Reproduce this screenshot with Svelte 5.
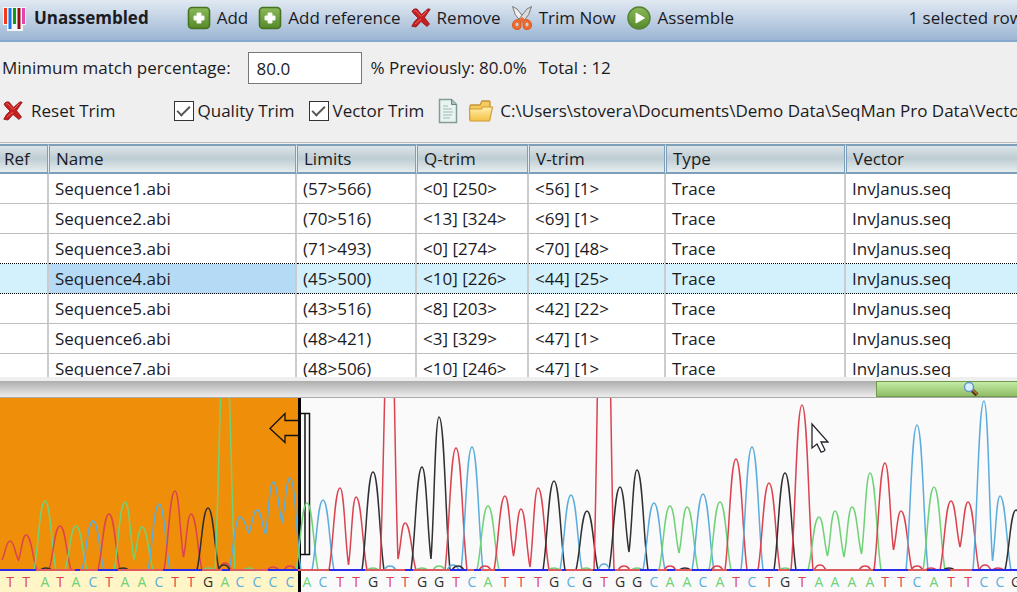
<script>
  const columns = ['Ref', 'Name', 'Limits', 'Q-trim', 'V-trim', 'Type', 'Vector'];
  const widths = [49, 248, 120, 112, 137, 180, 0];
  const rows = [
    ['Sequence1.abi', '(57>566)', '<0] [250>', '<56] [1>'],
    ['Sequence2.abi', '(70>516)', '<13] [324>', '<69] [1>'],
    ['Sequence3.abi', '(71>493)', '<0] [274>', '<70] [48>'],
    ['Sequence4.abi', '(45>500)', '<10] [226>', '<44] [25>'],
    ['Sequence5.abi', '(43>516)', '<8] [203>', '<42] [22>'],
    ['Sequence6.abi', '(48>421)', '<3] [329>', '<47] [1>'],
    ['Sequence7.abi', '(48>506)', '<10] [246>', '<47] [1>']
  ];
  let selected = $state(3);
  let minimum = $state('80.0');
  let quality = $state(true);
  let vector = $state(true);

  const floor = 172;
  const colors = { A: '#6fd277', C: '#5badde', G: '#303030', T: '#db4350' };
  // Base, centre, top of the peak, and the level of the dip before the next peak of the same base.
  const peaks = [
    ['T', 10, 143, 162], ['T', 26, 137], ['A', 45, 103], ['T', 60, 128], ['A', 76, 128], ['C', 93, 123],
    ['T', 109, 116], ['A', 125, 104, 161], ['A', 142, 129], ['C', 159, 106], ['T', 175, 93, 159],
    ['T', 191, 116], ['G', 208, 110], ['A', 225, -60], ['C', 240, 119, 135], ['C', 257, 112, 136],
    ['C', 273, 84, 124], ['C', 290, 80], ['A', 307, 105], ['C', 323, 102], ['T', 340, 90, 167],
    ['T', 356, 99], ['G', 373, 74], ['T', 390, -110, 161], ['T', 405, 125], ['G', 422, 69, 161],
    ['G', 439, 19], ['T', 456, 50], ['C', 472, 49], ['A', 488, 108], ['T', 505, 98, 158],
    ['T', 521, 111, 169], ['T', 538, 90], ['G', 554, 83], ['C', 571, 97], ['G', 587, 113],
    ['T', 604, -260], ['G', 620, 89, 154], ['G', 637, 72], ['C', 654, 105], ['A', 670, 108, 155],
    ['A', 687, 109], ['C', 703, 96], ['A', 720, 104], ['T', 736, 61], ['C', 752, 49], ['T', 769, 85],
    ['G', 785, 75], ['T', 802, 7], ['A', 819, 119, 158], ['A', 835, 113, 159], ['A', 852, 109, 156],
    ['A', 870, 75], ['T', 885, 65, 152], ['T', 901, 113], ['C', 917, 27], ['A', 934, 89],
    ['T', 951, 103, 149], ['T', 968, 104], ['C', 984, 3, 163], ['C', 1000, 98], ['G', 1016, 112]
  ];

  function flank(x0, y0, x1, y1, rising) {
    const w = x1 - x0;
    const h = y1 - y0;
    return rising
      ? `C${x0 + w * 0.4} ${y0 + h * 0.3} ${x1 - w * 0.5} ${y1} ${x1} ${y1}`
      : `C${x0 + w * 0.5} ${y0} ${x1 - w * 0.4} ${y1 - h * 0.3} ${x1} ${y1}`;
  }

  const curves = [];
  let path = '';
  peaks.forEach(([base, x, top, dip], i) => {
    const foot = top < 0 ? 10 : 11;
    if (!path) path = i === 0 ? `M2 162${flank(2, 162, x, top, true)}` : `M${x - foot} ${floor}${flank(x - foot, floor, x, top, true)}`;
    if (dip) {
      const [, nx, ntop] = peaks[i + 1];
      const mid = (x + nx) / 2 + 0.5;
      path += flank(x, top, mid, dip, false) + flank(mid, dip, nx, ntop, true);
    } else {
      path += flank(x, top, x + foot, floor, false);
      curves.push({ color: colors[base], d: path });
      path = '';
    }
  });

  const quiet = [
    [0, 36], [75, 80], [98, 118], [163, 202], [222, 230], [268, 298], [329, 365], [405, 413], [450, 467],
    [474, 481], [495, 548], [562, 566], [593, 615], [640, 657], [667, 675], [692, 712], [727, 778],
    [790, 813], [873, 908], [927, 950], [972, 2000]
  ];
  const noise = [
    ['G', 46], ['G', 123], ['A', 208], ['T', 225, 6], ['G', 224, 4], ['A', 249], ['T', 273, 2], ['T', 290, 3],
    ['A', 373], ['C', 390, 3], ['A', 422], ['A', 439, 3], ['C', 453, 4], ['G', 458, 3], ['T', 485, 3],
    ['A', 554], ['A', 586], ['C', 604, 5], ['T', 624, 3], ['A', 637], ['T', 670, 3], ['G', 685],
    ['T', 717, 3], ['A', 785], ['T', 820, 4], ['T', 865, 3], ['T', 917, 3], ['T', 931], ['G', 949], ['T', 985, 4], ['T', 998]
  ];
</script>

{#snippet cross()}
  <svg width="20" height="20" viewBox="0 0 20 20" aria-hidden="true">
    <path d="M1 3Q3 0 6 1L10.500 6.500 17 .8 19.200 1.300 13.500 9.500 18.500 16 16 18.500 10 13.500 5 19 .8 18.300Q3 13 7 10L2.500 5.500Z" fill="#c51f22" stroke="#8e1415" stroke-width=".8" />
    <path d="M3 3Q5 2 6 4L10 8.500M4 16 10 11M16 3 11 8" stroke="#e8685f" stroke-width="1" fill="none" />
  </svg>
{/snippet}

{#snippet plus()}
  <svg width="24" height="24" viewBox="0 0 24 24" aria-hidden="true">
    <rect x="1.500" y="1.500" width="21" height="21" rx="3.500" fill="url(#leaf)" stroke="#45731f" stroke-width="1.600" />
    <path d="M10 7h4v3h3v4h-3v3h-4v-3H7v-4h3Z" fill="#fff" stroke="#eef5e6" stroke-width="1" />
  </svg>
{/snippet}

<svg class="defs" width="0" height="0" aria-hidden="true">
  <defs>
    <linearGradient id="leaf" x1="0" y1="0" x2="0" y2="1"><stop stop-color="#8bb95a" /><stop offset="1" stop-color="#56892b" /></linearGradient>
    <linearGradient id="folder" x1="0" y1="0" x2="0" y2="1"><stop stop-color="#fff0ae" /><stop offset="1" stop-color="#f4c145" /></linearGradient>
  </defs>
</svg>

<main>
  <header>
    <svg width="26" height="26" viewBox="0 0 26 26" aria-hidden="true">
      <path d="M1 2h23v18h-3v6H5v-6H1Z" fill="#f4f7fa" />
      <path d="M3.500 3v16" stroke="#ee3a16" stroke-width="3" /><path d="M8 3v21" stroke="#1277ee" stroke-width="3" />
      <path d="M12.500 3v16" stroke="#109a18" stroke-width="3" /><path d="M17 3v21" stroke="#961010" stroke-width="3" />
      <path d="M21.500 3v16" stroke="#e446ad" stroke-width="3" />
    </svg>
    <h1>Unassembled</h1>
    <nav>
      <button>{@render plus()}Add</button>
      <button>{@render plus()}Add reference</button>
      <button>{@render cross()}Remove</button>
      <button>
        <svg width="22" height="26" viewBox="0 0 22 26" aria-hidden="true">
          <path d="M11 13 8.500 14.500Q2 14 1.500 20q0 4.500 5 4.500Q10 24.500 10 20v-4h2v4q0 4.500 3.500 4.500 5 0 5-4.500-.5-6-7-5.500Z" fill="#f26a29" stroke="#e1541b" />
          <path d="M1.500 1.500 6 4 14 14 10 17Q3 10 1.500 1.500Z" fill="#f0f0f0" stroke="#777" />
          <path d="M20.500 1.500 16 4 8 14 12 17Q19 10 20.500 1.500Z" fill="#dcdcdc" stroke="#777" />
          <path d="M8 14.500 11 12l3 2.500-2 2.500h-2Z" fill="#f26a29" />
          <ellipse cx="6" cy="19.500" rx="1.500" ry="2" fill="#c3cfdd" /><ellipse cx="16" cy="19.500" rx="1.500" ry="2" fill="#c3cfdd" />
        </svg>Trim Now
      </button>
      <button>
        <svg width="26" height="26" viewBox="0 0 26 26" aria-hidden="true">
          <circle cx="13" cy="13" r="11" fill="url(#leaf)" stroke="#568235" stroke-width="1.500" /><path d="M10 8 18.500 13 10 18Z" fill="#fff" stroke="#fff" />
        </svg>Assemble
      </button>
    </nav>
    <span class="status">1 selected row</span>
  </header>

  <section class="match">
    <label for="minimum">Minimum match percentage:</label>
    <input id="minimum" type="text" bind:value={minimum} />
    <span>% Previously: 80.0%</span><span class="total">Total : 12</span>
  </section>

  <section class="trim">
    <button class="reset">{@render cross()}Reset Trim</button>
    <label><input type="checkbox" bind:checked={quality} />Quality Trim</label>
    <label><input type="checkbox" bind:checked={vector} />Vector Trim</label>
    <button class="icon" aria-label="New file">
      <svg width="20" height="26" viewBox="0 0 20 26" aria-hidden="true">
        <path d="M1.500 1.500h12l5 5v18h-17Z" fill="#e9f3f0" stroke="#829c9a" stroke-width="1.500" /><path d="M13.500 1.500v5h5" fill="#a9c2bf" stroke="#648783" />
        <path d="M5 8h5M5 11h9M5 14h10M5 17h9M5 20h7" stroke="#a3bab7" />
      </svg>
    </button>
    <button class="icon" aria-label="Open folder">
      <svg width="26" height="24" viewBox="0 0 26 24" aria-hidden="true">
        <path d="M2 21V7q0-1 1-1h9l2-4h7q1 0 1 1v7" fill="#f4cb5e" stroke="#c6933a" stroke-width="1.300" />
        <path d="M1.500 10h12l1-2h10L22 20q0 2-2 2H3q-1 0-1-1Z" fill="url(#folder)" stroke="#d29c35" stroke-width="1.200" />
      </svg>
    </button>
    <span class="path">C:\Users\stovera\Documents\Demo Data\SeqMan Pro Data\Vector</span>
  </section>

  <div class="grid">
    <table>
      <colgroup>{#each widths as width}<col style={width ? `width: ${width}px` : ''} />{/each}</colgroup>
      <thead><tr>{#each columns as column}<th scope="col">{column}</th>{/each}</tr></thead>
      <tbody>
        {#each rows as row, i}
          <tr class:selected={selected === i} onclick={() => (selected = i)}>
            <td></td>{#each row as cell}<td>{cell}</td>{/each}<td>Trace</td><td>InvJanus.seq</td>
          </tr>
        {/each}
      </tbody>
    </table>
  </div>

  <div class="zoombar">
    <button aria-label="Zoom">
      <svg width="16" height="16" viewBox="0 0 16 16" aria-hidden="true">
        <path d="m9 9 5 5" stroke="#553515" stroke-width="4" /><path d="m10 9 4 4" stroke="#bc8137" stroke-width="1.500" />
        <circle cx="6" cy="6" r="4.500" fill="#d9efff" stroke="#6699c9" stroke-width="1.500" />
      </svg>
    </button>
  </div>

  <svg width="100%" height="194" role="img" aria-label="Sequence trace">
    <rect width="100%" height="194" fill="#fafafa" />
    <rect width="299" height="172" fill="#ef8e09" />
    <rect y="172" width="299" height="22" fill="#fff5c6" />
    <path d="M298 22.500h-13v-7l-15 15 15 14v-7h13" fill="none" stroke="#111" stroke-width="1.300" />
    <path d="M299.500 0v194" stroke="#000" stroke-width="3" />
    <path d="M301 15.500h8.500v141H301M305 16v140" fill="none" stroke="#111" stroke-width="1.500" />
    <g fill="none" stroke-width="1.500">
      {#each curves as curve}<path d={curve.d} stroke={curve.color} />{/each}
      {#each noise as [base, x, size = 1]}
        <path d={`M${x - 6} 172C${x - 3} ${171 - size} ${x - 2} ${171 - size} ${x} ${171 - size}S${x + 3} ${171 - size} ${x + 6} 172`} stroke={colors[base]} />
      {/each}
    </g>
    <rect y="171" width="100%" height="2" fill="#dd5960" />
    {#each quiet as [from, to]}<rect x={from} y="171" width={to - from} height="2" fill="#2a2aea" />{/each}
    <g class="bases">
      {#each peaks as [base, x]}<text {x} y="189" fill={colors[base]}>{base}</text>{/each}
    </g>
    <path d="M812 26v24l5-4 4 8q3 0 4-2l-4-8h7Z" fill="#fff" stroke="#252530" stroke-width="1.300" />
  </svg>
</main>

<style>
  :global(body) { margin: 0; background: #efefef; }
  main {
    height: 100vh; display: flex; flex-direction: column; overflow: hidden;
    background: #efefef; color: #1b1b1f; white-space: nowrap;
    font: 17px/24px "Open Sans", "Noto Sans", sans-serif;
  }
  .defs { position: absolute; }
  svg { display: block; flex: none; }
  button { font: inherit; color: inherit; border: 0; padding: 0; background: none; display: flex; align-items: center; }
  header {
    box-sizing: border-box; height: 42px; flex: none; display: flex; align-items: center; padding: 0 0 4px 2px;
    background: linear-gradient(#e1e9f2, #9cb6d4); border-bottom: 2px solid #86a8ce;
  }
  h1 { margin: 0 0 0 6px; font-size: 17px; font-weight: 700; }
  nav { display: flex; gap: 10px; margin-left: 38px; }
  nav button { gap: 6px; }
  .status { margin: 0 -6px 0 auto; }
  .match { flex: none; display: flex; align-items: center; padding: 10px 0 0 2px; }
  .match input {
    box-sizing: border-box; width: 114px; height: 32px; margin: 0 9px 0 17px; padding: 0 8px;
    border: 1px solid #777; background: #fff; color: inherit; font: inherit;
  }
  .total { margin-left: 12px; }
  .trim { flex: none; display: flex; align-items: center; height: 30px; padding: 12px 0 16px 3px; }
  .reset { gap: 8px; margin-right: 58px; }
  .trim label { display: flex; align-items: center; gap: 4px; margin-right: 14px; }
  .trim input {
    appearance: none; box-sizing: border-box; width: 20px; height: 20px; margin: 0; border: 1px solid #333;
    background: #fff; display: grid; place-items: center;
  }
  .trim input:checked::before {
    content: ""; width: 11px; height: 5px; margin-bottom: 4px; border: solid #555; border-width: 0 0 2px 2px; transform: rotate(-45deg);
  }
  .icon { margin-right: 10px; }
  .path { margin-left: -4px; }
  .grid { flex: 1 1 0; min-height: 0; overflow: hidden; border-top: 1px solid #bbb; padding-top: 1px; }
  table { width: 100%; table-layout: fixed; border-collapse: separate; border-spacing: 0; background: #fff; }
  th, td { box-sizing: border-box; height: 30px; padding: 0 0 0 6px; text-align: left; font-weight: 400; border-right: 2px solid #ccc; }
  th {
    border: solid #7e9fb9; border-width: 2px 1px 2px 1px; border-right-color: #e6edf2;
    background: linear-gradient(#dce4e7, #bdcdd3 48%, #e6edef); box-shadow: inset -1px 0 #7e9fb9;
  }
  th:first-child { border-left: 0; padding-left: 4px; }
  th:last-child, td:last-child { border-right: 0; box-shadow: none; }
  td { border-bottom: 1px solid #bdbdbd; }
  tr.selected td { background: #d3f1fd; border-bottom: 1px dotted #000; }
  tr.selected td:nth-child(2) { background: #b5daf5; }
  tr:has(+ .selected) td { border-bottom: 1px dotted #000; }
  .zoombar {
    flex: none; box-sizing: border-box; height: 17px; margin-top: 4px; display: flex; justify-content: flex-end;
    border-bottom: 1px solid #aaa; background: linear-gradient(#adadad, #ededed);
  }
  .zoombar button {
    width: 141px; padding-left: 86px; box-sizing: border-box; overflow: hidden;
    border: 1px solid #6f994c; border-right: 0; background: linear-gradient(#c4eba4, #8fbd68);
  }
  .bases { font-size: 14px; text-anchor: middle; }
</style>
